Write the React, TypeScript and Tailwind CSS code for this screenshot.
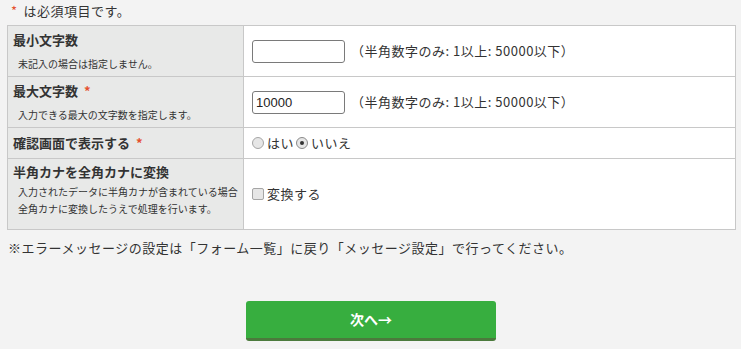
import React from "react";

const font = { fontFamily: '"Noto Sans CJK JP", "Noto Sans", sans-serif' };

function Req() {
  return <span className="text-[#e5512f] ml-[6px]">*</span>;
}

export default function App() {
  return (
    <div className="w-[741px] h-[349px] bg-[#f3f3f3] text-[#333] overflow-hidden" style={font}>
      <div className="pl-[11px] pt-[1px] h-[25px] text-[13px] leading-[20px] tracking-[0.5px]">
        <span className="text-[#e5512f] mr-[6px]">*</span>は必須項目です。
      </div>
      <table className="ml-[7px] w-[729px] border-collapse border border-[#c8c8c8] bg-white">
        <tbody>
          <tr className="h-[51px] border-b border-[#c8c8c8]">
            <td className="w-[236px] bg-[#e8e9e8] border-r border-[#c8c8c8] align-top pl-[5px] pt-[4px]">
              <div className="text-[13px] font-bold leading-[20px]">最小文字数</div>
              <div className="text-[10px] leading-[16px] pl-[5px] mt-[6px]">未記入の場合は指定しません。</div>
            </td>
            <td className="pl-[8px]">
              <div className="flex items-center">
                <input className="w-[93px] h-[23px] border border-[#7a7a7a] rounded-[3px] bg-white px-[3px] text-[13px] outline-none" />
                <span className="ml-[6px] text-[13px] tracking-[0.5px]">（半角数字のみ: 1以上: 50000以下）</span>
              </div>
            </td>
          </tr>
          <tr className="h-[51px] border-b border-[#c8c8c8]">
            <td className="bg-[#e8e9e8] border-r border-[#c8c8c8] align-top pl-[5px] pt-[4px]">
              <div className="text-[13px] font-bold leading-[20px]">
                最大文字数<Req />
              </div>
              <div className="text-[10px] leading-[16px] pl-[5px] mt-[6px]">入力できる最大の文字数を指定します。</div>
            </td>
            <td className="pl-[8px]">
              <div className="flex items-center">
                <input
                  defaultValue="10000"
                  className="w-[93px] h-[23px] border border-[#7a7a7a] rounded-[3px] bg-white px-[3px] text-[13px] text-[#222] outline-none"
                  style={{ fontFamily: '"Liberation Sans", Arial, sans-serif' }}
                />
                <span className="ml-[6px] text-[13px] tracking-[0.5px]">（半角数字のみ: 1以上: 50000以下）</span>
              </div>
            </td>
          </tr>
          <tr className="h-[31px] border-b border-[#c8c8c8]">
            <td className="bg-[#e8e9e8] border-r border-[#c8c8c8] pl-[5px]">
              <div className="text-[13px] font-bold leading-[20px]">
                確認画面で表示する<Req />
              </div>
            </td>
            <td className="pl-[8px]">
              <div className="flex items-center text-[13px] tracking-[0.5px]">
                <span className="w-[12px] h-[12px] rounded-full border border-[#a5a5a5] bg-[#e6e6e6]" />
                <span className="ml-[3px]">はい</span>
                <span className="ml-[2px] w-[12px] h-[12px] rounded-full border border-[#8a8a8a] bg-[#e6e6e6] flex items-center justify-center">
                  <span className="w-[4px] h-[4px] rounded-full bg-[#333]" />
                </span>
                <span className="ml-[3px]">いいえ</span>
              </div>
            </td>
          </tr>
          <tr className="h-[71px]">
            <td className="bg-[#e8e9e8] border-r border-[#c8c8c8] align-top pl-[5px] pt-[3px]">
              <div className="text-[13px] font-bold leading-[20px]">半角カナを全角カナに変換</div>
              <div className="text-[10px] leading-[17px] pl-[5px] mt-[1px]">
                入力されたデータに半角カナが含まれている場合
                <br />
                全角カナに変換したうえで処理を行います。
              </div>
            </td>
            <td className="pl-[8px]">
              <div className="flex items-center text-[13px] tracking-[0.5px]">
                <span className="w-[12px] h-[12px] rounded-[2px] border border-[#a5a5a5] bg-[#e6e6e6]" />
                <span className="ml-[3px]">変換する</span>
              </div>
            </td>
          </tr>
        </tbody>
      </table>
      <div className="pl-[8px] mt-[8px] text-[13px] leading-[20px] tracking-[0.5px]">
        ※エラーメッセージの設定は「フォーム一覧」に戻り「メッセージ設定」で行ってください。
      </div>
      <div className="flex justify-center mt-[43px] pl-[1px]">
        <button className="w-[250px] h-[40px] rounded-[3px] bg-[#37ae3f] border-b-[3px] border-[#4b7a3c] text-white font-bold text-[14px]">
          次へ→
        </button>
      </div>
    </div>
  );
}
